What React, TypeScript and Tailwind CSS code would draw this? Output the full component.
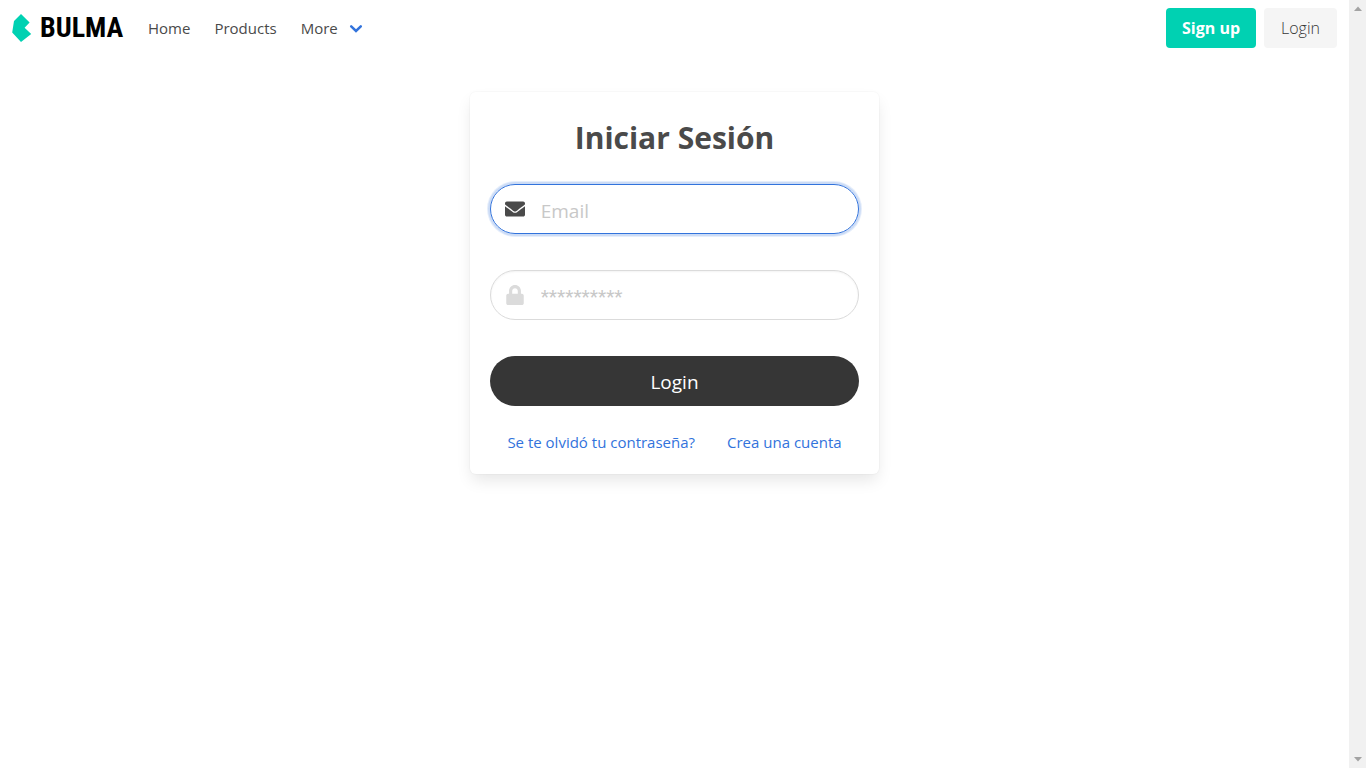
import React from "react";
import { FaEnvelope, FaLock } from "react-icons/fa";

const navLinks = ["Home", "Products"];

function Logo() {
  return (
    <a href="#" className="flex w-[136px] items-center gap-2 px-3" aria-label="Bulma">
      <svg viewBox="0 0 20 28" className="h-7 w-5 shrink-0" aria-hidden="true">
        <path d="M0.2 18.5 L2 7 L9 0 L17.6 8.4 L12.6 13.8 L19.2 20 L9 28 Z" fill="#00d1b2" />
      </svg>
      <span className="font-['Roboto_Condensed','Roboto',sans-serif] text-[28px] leading-7 font-bold text-black">
        BULMA
      </span>
    </a>
  );
}

function Navbar() {
  return (
    <nav className="flex h-14 items-center justify-between pr-3 text-[#4a4a4a]">
      <div className="flex items-center">
        <Logo />
        <div className="flex items-center">
          {navLinks.map((label) => (
            <a key={label} href="#" className="px-3">
              {label}
            </a>
          ))}
          <a href="#" className="flex items-center gap-[11px] px-3">
            More
            <svg viewBox="0 0 14 10" className="h-[10px] w-[14px]" fill="none" aria-hidden="true">
              <path d="M2.2 3.3 L7 7.9 L11.8 3.3" stroke="#3273dc" strokeWidth="2.5" strokeLinecap="round" />
            </svg>
          </a>
        </div>
      </div>
      <div className="flex gap-2 text-base">
        <button type="button" className="h-10 rounded bg-[#00d1b2] px-4 font-bold text-white">
          Sign up
        </button>
        <button type="button" className="h-10 rounded bg-[#f5f5f5] px-[17px] font-light text-[#363636]">
          Login
        </button>
      </div>
    </nav>
  );
}

function LoginCard() {
  return (
    <form className="flex flex-col gap-9 rounded-md bg-white p-5 shadow-[0_8px_16px_-2px_rgba(10,10,10,0.1),0_0_0_1px_rgba(10,10,10,0.02)]">
      <h1 className="-mb-3 pt-1 text-center text-[30px] leading-[44px] font-bold text-[#4a4a4a]">Iniciar Sesión</h1>
      <label className="flex h-[50px] items-center gap-4 rounded-full border border-[#3273dc] pr-5 pl-[14px] text-[#4a4a4a] shadow-[0_0_0_2px_rgba(50,115,220,0.14),0_0_0_3px_rgba(50,115,220,0.12)]">
        <FaEnvelope className="size-5 shrink-0" aria-hidden="true" />
        <input
          type="email"
          aria-label="Email"
          placeholder="Email"
          className="w-full min-w-0 bg-transparent pt-1 text-[19px] leading-7 outline-none placeholder:text-[#c8c8c8]"
        />
      </label>
      <label className="flex h-[50px] items-center gap-4 rounded-full border border-[#dbdbdb] pr-5 pl-[14px] text-[#dbdbdb] shadow-[inset_0_1px_2px_rgba(10,10,10,0.05)]">
        <FaLock className="size-5 shrink-0" aria-hidden="true" />
        <input
          type="password"
          aria-label="Contraseña"
          placeholder="**********"
          className="w-full min-w-0 bg-transparent pt-1 font-['Roboto',sans-serif] text-[19px] leading-7 text-[#363636] outline-none placeholder:text-[#c8c8c8]"
        />
      </label>
      <button type="button" className="h-[50px] rounded-full bg-[#363636] pt-px text-[19px] leading-7 text-white">
        Login
      </button>
      <div className="-mt-3 flex justify-center gap-8 text-[#3273dc]">
        <a href="#">Se te olvidó tu contraseña?</a>
        <a href="#">Crea una cuenta</a>
      </div>
    </form>
  );
}

function ScrollTrack() {
  return (
    <div className="flex w-[17px] shrink-0 flex-col items-center justify-between bg-[#f1f1f1] py-[6px]" aria-hidden="true">
      <svg viewBox="0 0 8 5" className="h-[5px] w-2">
        <path d="M0 5 L4 0.5 L8 5 Z" fill="#a3a3a3" />
      </svg>
      <svg viewBox="0 0 8 5" className="h-[5px] w-2">
        <path d="M0 0 L4 4.5 L8 0 Z" fill="#a3a3a3" />
      </svg>
    </div>
  );
}

export default function App() {
  return (
    <div className="flex min-h-screen bg-white font-['Open_Sans','Noto_Sans',sans-serif] text-[15px] leading-6 font-normal">
      <div className="min-w-0 flex-1">
        <Navbar />
        <main className="px-6 py-9">
          <div className="mx-auto w-full px-3 md:w-1/3">
            <LoginCard />
          </div>
        </main>
      </div>
      <ScrollTrack />
    </div>
  );
}
